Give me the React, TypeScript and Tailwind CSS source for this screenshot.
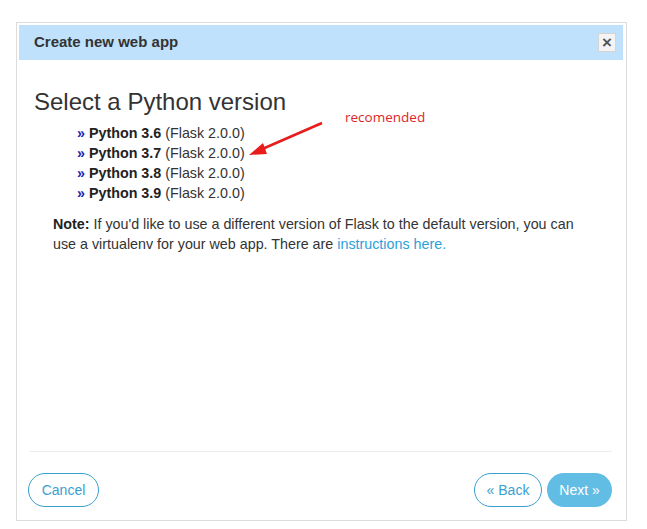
import React from "react";

const versions = ["3.6", "3.7", "3.8", "3.9"];

export default function App() {
  return (
    <div className="relative w-[647px] h-[529px] bg-white pt-[22px] pl-[16px]" style={{ fontFamily: '"Liberation Sans", Arial, sans-serif' }}>
      <div className="w-[611px] h-[499px] border border-[#dcdcdc] pl-[2px] pr-[3px] py-[2px] flex flex-col">
        <div className="h-[35px] bg-[#bfe1fb] flex items-center justify-between pl-[15px] pr-[7px]">
          <span className="text-[15px] font-bold text-[#333]">Create new web app</span>
          <span className="w-[18px] h-[19px] bg-[#f4f4f4] border border-[#d4d4d4] flex items-center justify-center text-[#555] text-[17px] font-bold leading-none">×</span>
        </div>
        <div className="flex-1 px-[15px] pt-[29px]">
          <h1 className="text-[24px] leading-[26px] text-[#333]">Select a Python version</h1>
          <ul className="mt-[8px] pl-[43px] text-[14.3px] leading-[20px] text-[#333]">
            {versions.map((v) => (
              <li key={v}>
                <span className="text-[#2222b4] font-bold">»</span>{" "}
                <b className="text-[#222]">Python {v}</b> (Flask 2.0.0)
              </li>
            ))}
          </ul>
          <p className="mt-[11px] pl-[19px] pr-[10px] text-[14.3px] leading-[20px] text-[#333]">
            <b className="text-[#222]">Note:</b> If you'd like to use a different version of Flask to the default version, you can use a virtualenv for your web app. There are{" "}
            <span className="text-[#2d9fd9]">instructions here.</span>
          </p>
        </div>
        <div className="mx-[11px] border-t border-[#ececec]" />
        <div className="h-[66px] flex items-start justify-between pl-[9px] pr-[11px] pt-[21px]">
          <button className="h-[34px] w-[71px] rounded-full border border-[#3a9fd0] text-[#3a9fd0] text-[14px]">Cancel</button>
          <div className="flex gap-[5px]">
            <button className="h-[34px] w-[68px] rounded-full border border-[#3a9fd0] text-[#3a9fd0] text-[14px]">« Back</button>
            <button className="h-[34px] w-[65px] rounded-full bg-[#62bde5] text-white text-[14px]">Next »</button>
          </div>
        </div>
      </div>
      <span className="absolute left-[345px] top-[107px] text-[13.5px] text-[#e01f1f]" style={{ fontFamily: '"Open Sans", sans-serif' }}>recomended</span>
      <svg className="absolute left-0 top-0" width="647" height="529" viewBox="0 0 647 529">
        <line x1="322" y1="123" x2="260" y2="150" stroke="#e81c1c" strokeWidth="2.5" />
        <polygon points="249,155 263,143 267,154" fill="#e81c1c" />
      </svg>
    </div>
  );
}
